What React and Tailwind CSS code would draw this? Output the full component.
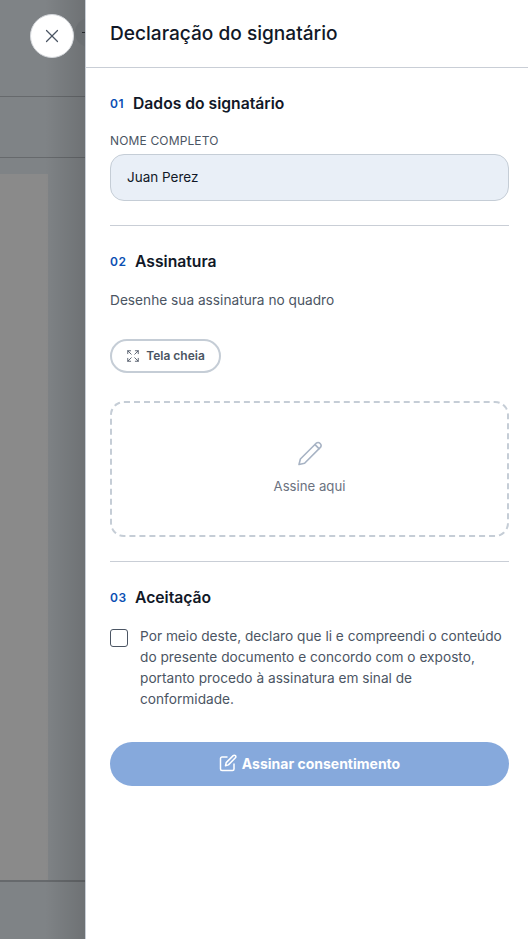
import { Expand, X } from "lucide-react";

const sans = "font-['Inter','Noto_Sans',sans-serif]";

function SectionTitle({ number, title, numberWidth = "w-[25px]" }) {
  return (
    <div className="flex items-center">
      <span className={`${numberWidth} shrink-0 text-[12px] leading-[20px] font-semibold tracking-[0.5px] text-[#0b4fb3]`}>{number}</span>
      <h3 className="text-[15.7px] leading-[20px] font-semibold text-[#111827]">{title}</h3>
    </div>
  );
}

function Backdrop() {
  return (
    <div className="flex h-[939px] w-[85px] shrink-0 flex-col bg-[#7f8386]">
      <div className="h-[97px] shrink-0 border-b border-[#66696c]" />
      <div className="h-[61px] shrink-0 border-b border-[#66696c]" />
      <div className="mt-[16px] h-[706px] w-[48px] shrink-0 bg-[#8a8a8a]" />
      <div className="flex-1 border-t-2 border-[#66696c]" />
    </div>
  );
}

function SignPencil() {
  return (
    <svg width="26" height="26" viewBox="0 0 26 26" fill="none" stroke="#a7b3c4" strokeWidth="1.6" strokeLinejoin="round" strokeLinecap="round">
      <path d="M2 24.5 L3.4 19 L19.2 3.2 A3 3 0 0 1 23.4 7.4 L7.6 23.2 Z" />
      <path d="M18 4.6 L22 8.6" />
    </svg>
  );
}

function SignButtonIcon() {
  return (
    <svg width="18" height="18" viewBox="0 0 18 18" fill="none" stroke="currentColor" strokeWidth="1.5" strokeLinejoin="round" strokeLinecap="round">
      <path d="M8 3H3A1.5 1.5 0 0 0 1.5 4.5V15A1.5 1.5 0 0 0 3 16.5H13.5A1.5 1.5 0 0 0 15 15V10" />
      <path d="M6.5 11.7 L7.2 8.6 L14.2 1.6 A1.5 1.5 0 0 1 16.4 3.8 L9.4 10.9 Z" />
    </svg>
  );
}

export default function App() {
  return (
    <div className={`relative flex h-[939px] w-[528px] overflow-hidden ${sans}`}>
      <Backdrop />
      <div className="pointer-events-none absolute top-0 left-[45px] h-[939px] w-[40px] bg-gradient-to-r from-transparent to-[#00000022]" />

      {/* button of the page behind, mostly covered by the panel */}
      <div className="absolute top-[18px] left-[75px] flex h-[29px] w-[29px] items-center justify-center rounded-full bg-[#6b6f72]">
        <span className="mr-[13px] mb-[1px] h-[1px] w-[3px] bg-[#25282b]" />
      </div>

      <button className="absolute top-[14px] left-[30px] z-10 flex h-[44px] w-[44px] items-center justify-center rounded-full border border-[#d5d8dc] bg-white text-[#4b5563]">
        <X size={22} strokeWidth={1.3} />
      </button>

      <aside className="relative flex-1 border-l border-[#c9ced6] bg-white">
        <header className="flex h-[68px] items-center border-b border-[#c9ced6] pl-[24px]">
          <h2 className="text-[19.1px] font-medium text-[#111827]">Declaração do signatário</h2>
        </header>

        <div className="pr-[19px] pl-[24px]">
          <section className="border-b border-[#c9ced6] pt-[26px] pb-[24px]">
            <SectionTitle number="01" title="Dados do signatário" numberWidth="w-[23px]" />
            <label className="mt-[19px] block text-[12px] leading-[16px] tracking-[0.15px] text-[#4b5563]">NOME COMPLETO</label>
            <div className="mt-[5px] flex h-[47px] items-center rounded-[14px] border border-[#c5cdd6] bg-[#e9eff7] px-[16px] text-[13.5px] text-[#111827]">
              Juan Perez
            </div>
          </section>

          <section className="border-b border-[#c9ced6] pt-[26px] pb-[24px]">
            <SectionTitle number="02" title="Assinatura" />
            <p className="mt-[18px] text-[13.7px] leading-[20px] text-[#4b5563]">Desenhe sua assinatura no quadro</p>
            <button className="mt-[29px] flex h-[34px] w-[111px] items-center justify-center gap-[6px] rounded-full border-2 border-[#c5cdd6] text-[12px] font-semibold text-[#4b5563]">
              <Expand size={14} strokeWidth={1.5} />
              Tela cheia
            </button>
            <div className="mt-[28px] flex h-[136px] flex-col items-center justify-center rounded-[14px] border-2 border-dashed border-[#c5cdd6] pb-[3px]">
              <SignPencil />
              <span className="mt-[11px] text-[13.2px] leading-[18px] text-[#6b7280]">Assine aqui</span>
            </div>
          </section>

          <section className="pt-[26px]">
            <SectionTitle number="03" title="Aceitação" />
            <div className="mt-[18px] flex items-start">
              <span className="mt-[3px] h-[18px] w-[18px] shrink-0 rounded-[3px] border border-[#4b5563]" />
              <p className="ml-[12px] text-[13.7px] leading-[21px] text-[#4b5563]">
                Por meio deste, declaro que li e compreendi o conteúdo do presente documento e concordo com o exposto, portanto procedo à assinatura em sinal de conformidade.
              </p>
            </div>
            <button className="mt-[32px] flex h-[44px] w-full items-center justify-center gap-[5px] rounded-full bg-[#86a9dc] pb-[2px] text-[14px] font-bold text-white">
              <SignButtonIcon />
              Assinar consentimento
            </button>
          </section>
        </div>
      </aside>
    </div>
  );
}
